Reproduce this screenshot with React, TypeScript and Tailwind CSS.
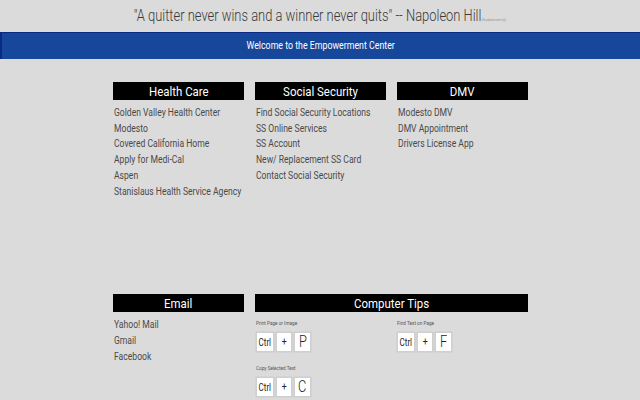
const FONT = "font-['Roboto',sans-serif]";

const TOP = [
  {
    title: "Health Care",
    links: [
      "Golden Valley Health Center",
      "Modesto",
      "Covered California Home",
      "Apply for Medi-Cal",
      "Aspen",
      "Stanislaus Health Service Agency",
    ],
  },
  {
    title: "Social Security",
    links: [
      "Find Social Security Locations",
      "SS Online Services",
      "SS Account",
      "New/ Replacement SS Card",
      "Contact Social Security",
    ],
  },
  {
    title: "DMV",
    links: ["Modesto DMV", "DMV Appointment", "Drivers License App"],
  },
];

// Roboto narrowed to stand in for the condensed face in the screenshot
function Narrow({ children }: { children: React.ReactNode }) {
  return <span className="inline-block origin-left scale-x-[0.78] whitespace-nowrap">{children}</span>;
}

function Header({ title }: { title: string }) {
  return (
    <div className="flex h-[18px] items-center justify-center bg-black text-[13px] leading-none text-white">
      <span className="inline-block scale-x-[0.88] whitespace-nowrap">{title}</span>
    </div>
  );
}

function Links({ links }: { links: string[] }) {
  return (
    <ul className="mt-[5px] flex flex-col pl-[1px] text-[11px] leading-[15.7px] text-[#4a4a4a]">
      {links.map((l) => (
        <li key={l}>
          <Narrow>{l}</Narrow>
        </li>
      ))}
    </ul>
  );
}

function Key({ k, w, size }: { k: string; w: string; size: string }) {
  return (
    <div
      className={`flex h-[20px] items-center justify-center overflow-hidden border border-[#cfcfcf] bg-white text-[#222] shadow-[0_0_1px_#aaa] ${w} ${size}`}
    >
      <span className="inline-block scale-x-[0.8]">{k}</span>
    </div>
  );
}

function Shortcut({ label, letter }: { label: string; letter: string }) {
  return (
    <div className="flex flex-col">
      <div className="text-[6px] leading-none text-[#555]">
        <Narrow>{label}</Narrow>
      </div>
      <div className="mt-[6px] flex gap-[2px]">
        <Key k="Ctrl" w="w-[18px]" size="text-[10px]" />
        <Key k="+" w="w-[16px]" size="text-[11px]" />
        <Key k={letter} w="w-[17px]" size="text-[16px] font-light" />
      </div>
    </div>
  );
}

export default function App() {
  return (
    <div className={`h-[400px] w-[640px] overflow-hidden bg-[#dcdbdb] ${FONT}`}>
      <div className="flex h-[32px] items-center justify-center pb-[1px] text-[17px] font-light text-[#3a3a3a]">
        <span className="inline-block scale-x-[0.76] whitespace-nowrap">
          "A quitter never wins and a winner never quits" -- Napoleon Hill
          <span className="text-[4px] text-[#777]">(Keyakata.com/qt)</span>
        </span>
      </div>
      <div className="flex h-[27px] items-center justify-center border-l-2 border-t border-[#0a2a85] bg-[#17479a] text-[11px] text-white">
        <span className="inline-block scale-x-[0.8] whitespace-nowrap">Welcome to the Empowerment Center</span>
      </div>

      <div className="ml-[113px] mt-[23px] grid w-[415px] grid-cols-[131px_131px_131px] gap-x-[11px]">
        {TOP.map((s) => (
          <div key={s.title}>
            <Header title={s.title} />
            <Links links={s.links} />
          </div>
        ))}
      </div>

      <div className="ml-[113px] mt-[95px] grid w-[415px] grid-cols-[131px_273px] gap-x-[11px]">
        <div>
          <Header title="Email" />
          <Links links={["Yahoo! Mail", "Gmail", "Facebook"]} />
        </div>
        <div>
          <Header title="Computer Tips" />
          <div className="mt-[8px] grid grid-cols-[141px_1fr] gap-y-[13px] pl-[1px]">
            <Shortcut label="Print Page or Image" letter="P" />
            <Shortcut label="Find Text on Page" letter="F" />
            <Shortcut label="Copy Selected Text" letter="C" />
          </div>
        </div>
      </div>
    </div>
  );
}
